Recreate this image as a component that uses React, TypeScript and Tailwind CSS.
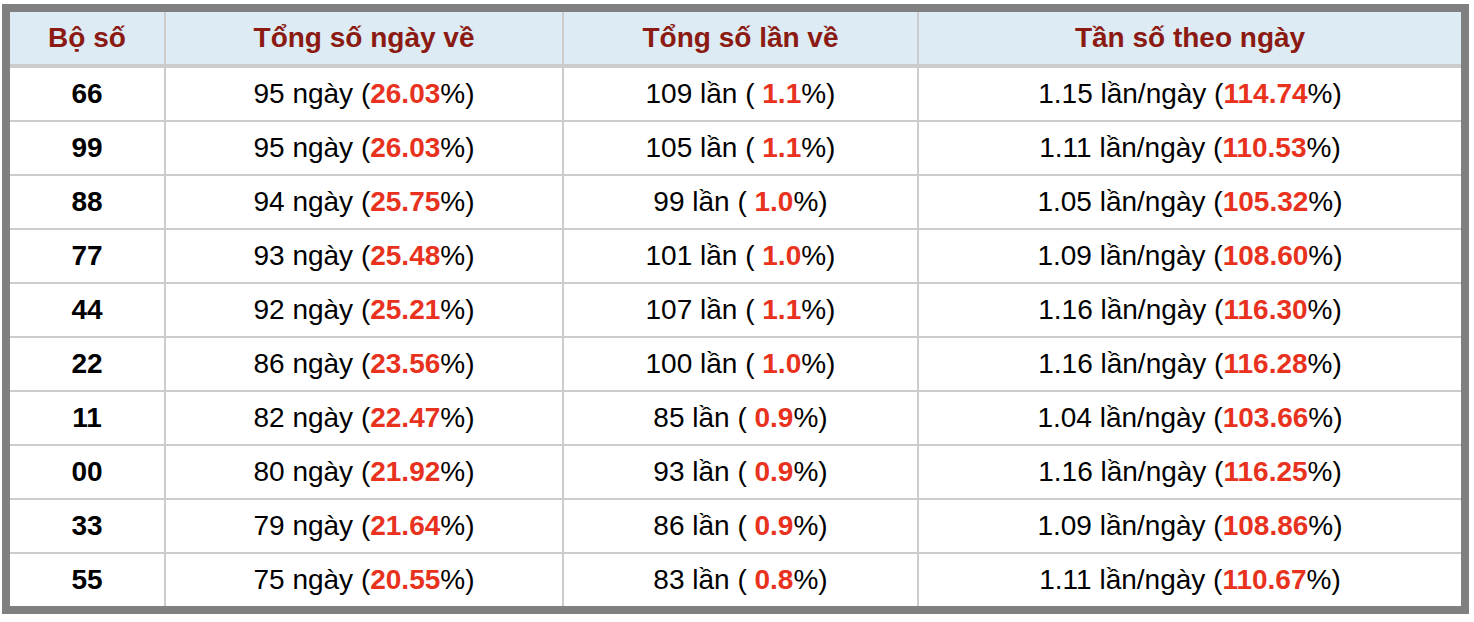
const rows = [
  { so: '66', ngay: '95', pNgay: '26.03', lan: '109', pLan: '1.1', tan: '1.15', pTan: '114.74' },
  { so: '99', ngay: '95', pNgay: '26.03', lan: '105', pLan: '1.1', tan: '1.11', pTan: '110.53' },
  { so: '88', ngay: '94', pNgay: '25.75', lan: '99', pLan: '1.0', tan: '1.05', pTan: '105.32' },
  { so: '77', ngay: '93', pNgay: '25.48', lan: '101', pLan: '1.0', tan: '1.09', pTan: '108.60' },
  { so: '44', ngay: '92', pNgay: '25.21', lan: '107', pLan: '1.1', tan: '1.16', pTan: '116.30' },
  { so: '22', ngay: '86', pNgay: '23.56', lan: '100', pLan: '1.0', tan: '1.16', pTan: '116.28' },
  { so: '11', ngay: '82', pNgay: '22.47', lan: '85', pLan: '0.9', tan: '1.04', pTan: '103.66' },
  { so: '00', ngay: '80', pNgay: '21.92', lan: '93', pLan: '0.9', tan: '1.16', pTan: '116.25' },
  { so: '33', ngay: '79', pNgay: '21.64', lan: '86', pLan: '0.9', tan: '1.09', pTan: '108.86' },
  { so: '55', ngay: '75', pNgay: '20.55', lan: '83', pLan: '0.8', tan: '1.11', pTan: '110.67' },
]

const cols = 'grid grid-cols-[154px_396px_353px_1fr] gap-x-[2px]'

function Red({ children }: { children: React.ReactNode }) {
  return <b className="font-bold text-[#e8321e]">{children}</b>
}

export default function App() {
  return (
    <div className="min-h-screen bg-white font-['Liberation_Sans',Arial,sans-serif] text-black">
      <div className="ml-[2px] mt-[4px] w-[1467px] border-[8px] border-[#808080]">
        <div className="flex flex-col gap-y-[4px] bg-[#cccccc]">
          {/* header */}
          <div className={cols}>
            {['Bộ số', 'Tổng số ngày về', 'Tổng số lần về', 'Tần số theo ngày'].map((h) => (
              <div key={h} className="flex h-[52px] items-center justify-center bg-[#ddebf4] text-[28px] font-bold text-[#8b1a12]">
                {h}
              </div>
            ))}
          </div>

          {/* body */}
          <div className={`${cols} gap-y-[2px] text-[28px]`}>
            {rows.map((r) => (
              <div key={r.so} className="contents">
                <div className="flex h-[52px] items-center justify-center bg-white font-bold">{r.so}</div>
                <div className="flex h-[52px] items-center justify-center bg-white">
                  {r.ngay} ngày (<Red>{r.pNgay}</Red>%)
                </div>
                <div className="flex h-[52px] items-center justify-center bg-white whitespace-pre">
                  {r.lan} lần ( <Red>{r.pLan}</Red>%)
                </div>
                <div className="flex h-[52px] items-center justify-center bg-white">
                  {r.tan} lần/ngày (<Red>{r.pTan}</Red>%)
                </div>
              </div>
            ))}
          </div>
        </div>
      </div>
    </div>
  )
}
